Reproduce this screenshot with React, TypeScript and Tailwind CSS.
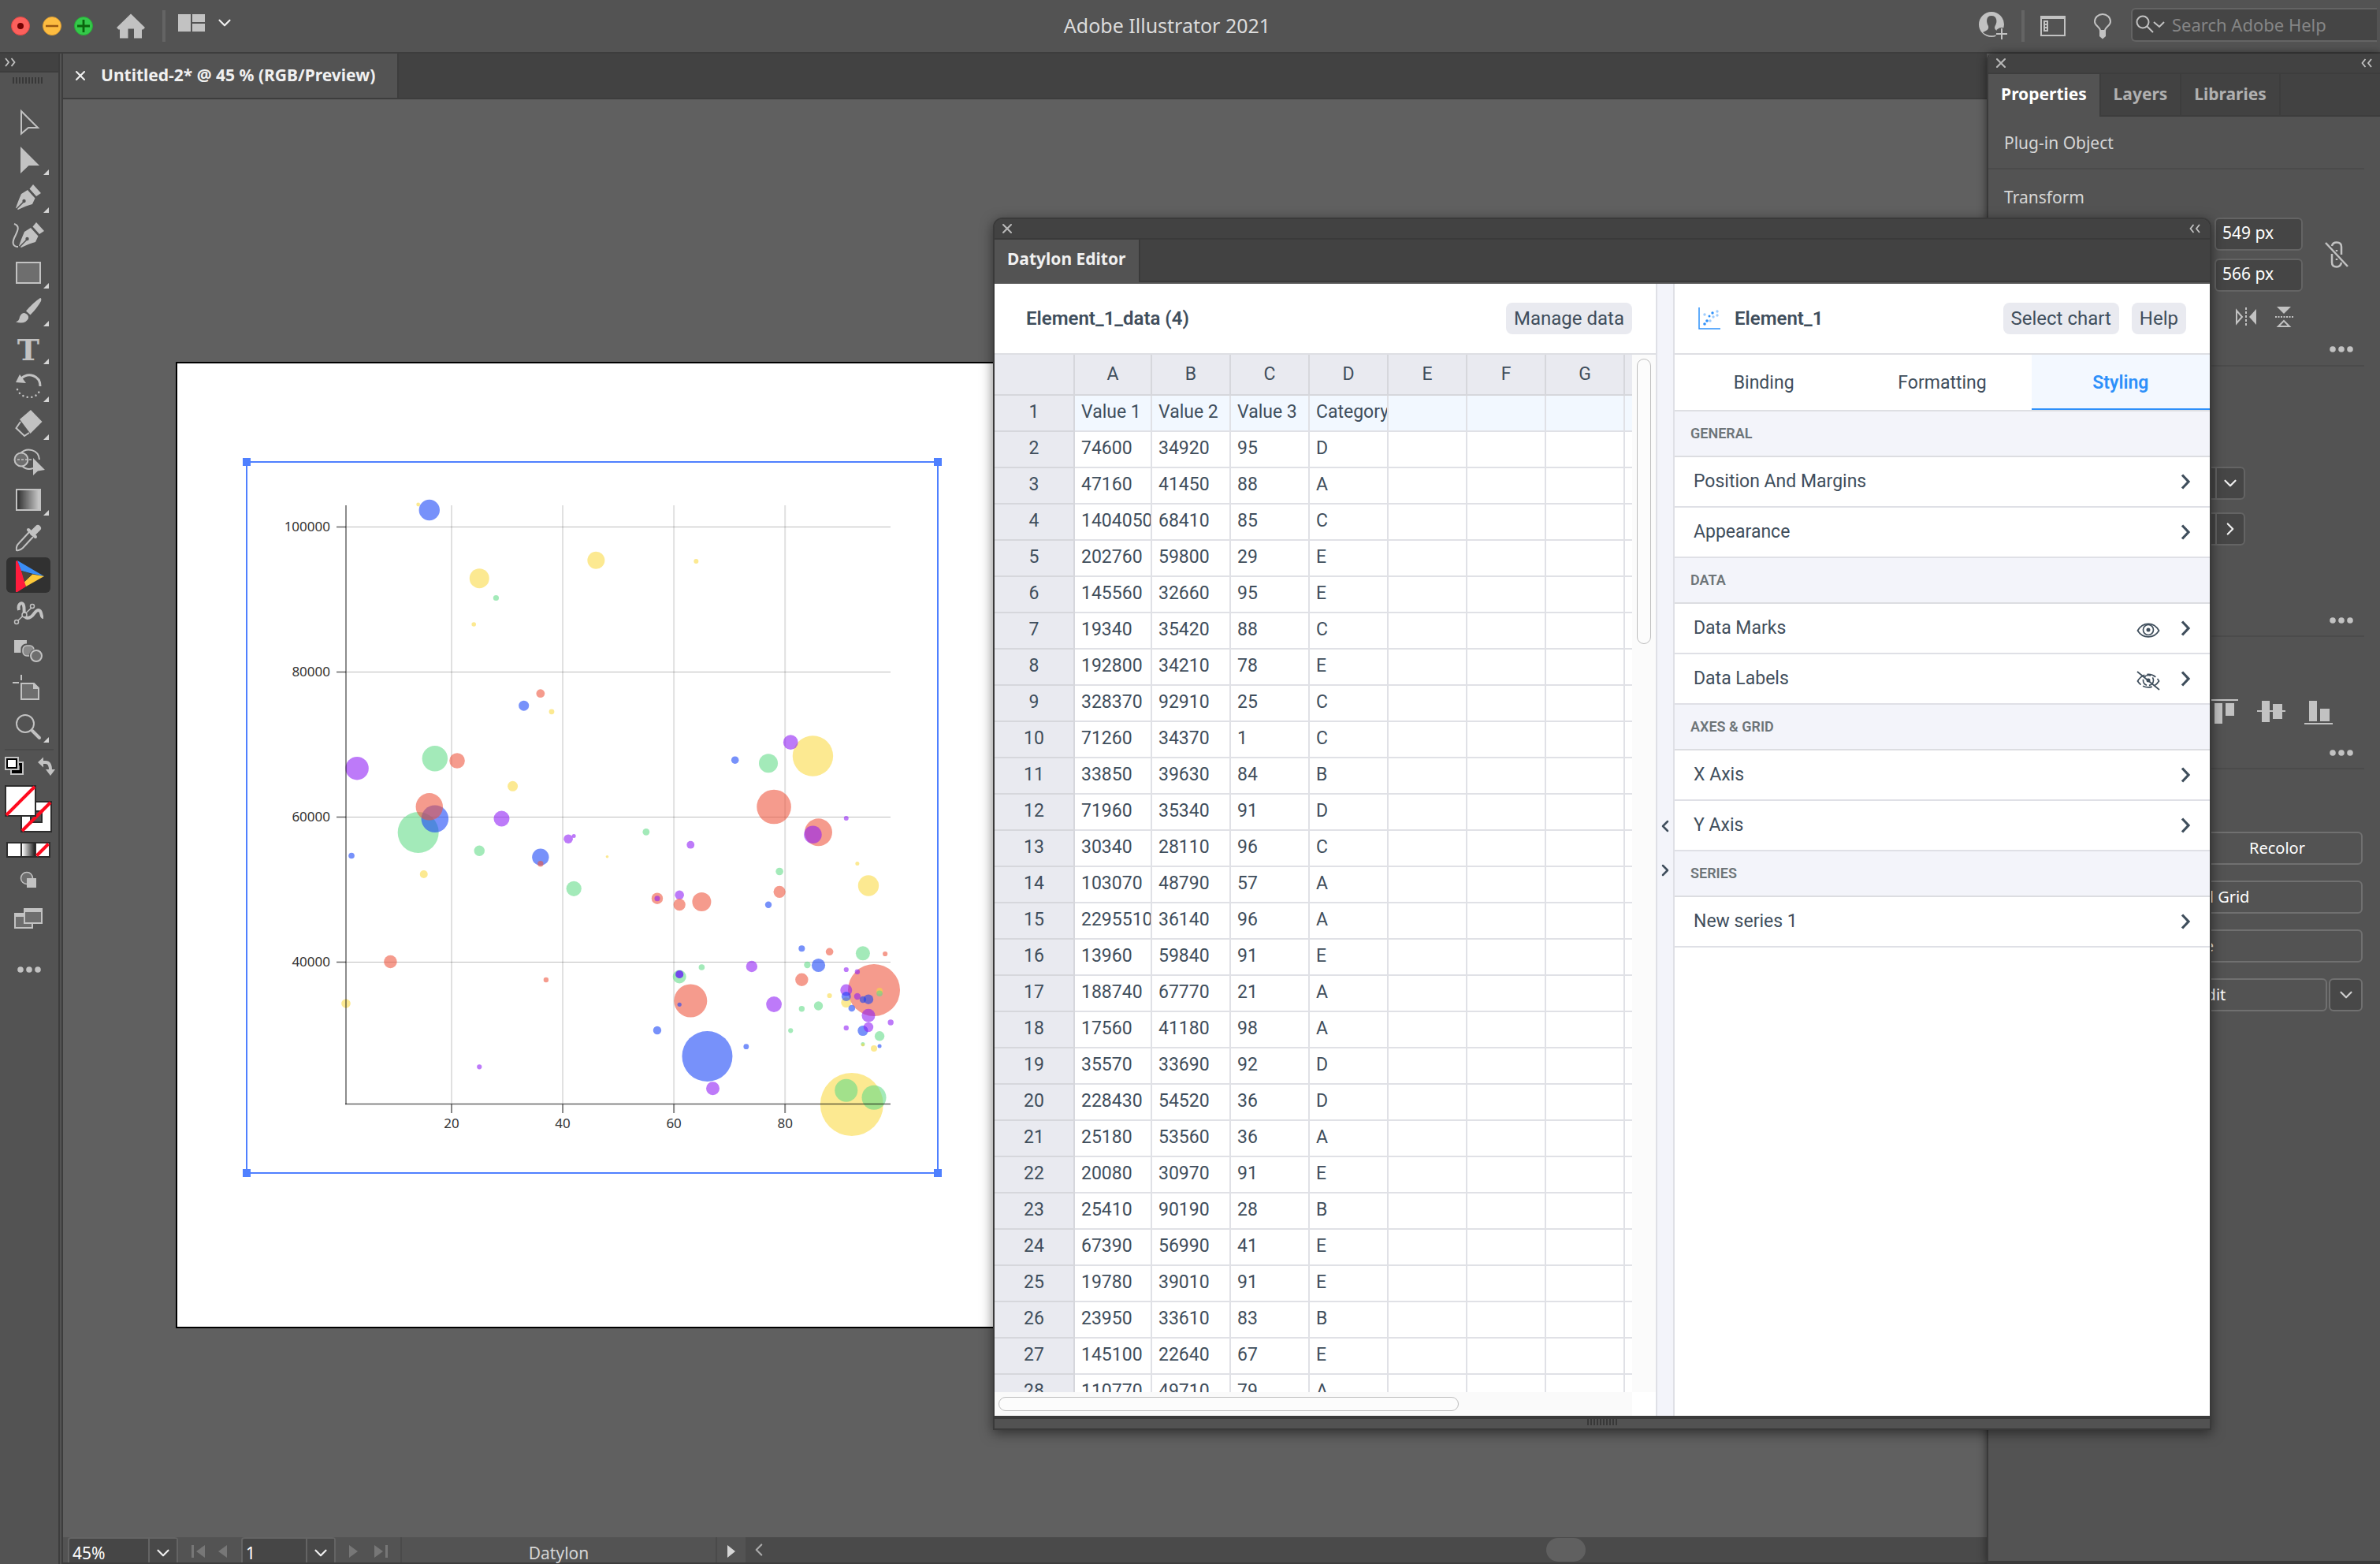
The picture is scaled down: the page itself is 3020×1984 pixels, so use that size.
import React from "react";
import { ChevronDown, ChevronLeft, ChevronRight, X } from "lucide-react";

type Bubble = [x: number, y: number, r: number, color: string];

const RED = "#ee533b";
const BLUE = "#1441f6";
const GREEN = "#60db86";
const YELLOW = "#fad941";
const PURPLE = "#8d1af5";

const bubbles: Bubble[] = [
  [14, 640, 2.4, YELLOW], [16, 647, 13.2, BLUE], [46, 710.7, 11, YELLOW], [64, 712, 3, YELLOW],
  [25, 733.7, 12.5, YELLOW], [28, 758.5, 3.6, GREEN], [24, 792, 2.8, YELLOW], [36, 879.7, 5.4, RED],
  [33, 895.2, 6.5, BLUE], [38, 902.8, 3.4, YELLOW], [85, 959, 25.7, YELLOW], [81, 941.7, 9.4, PURPLE],
  [71, 964.2, 4.8, BLUE], [77, 968.3, 12, GREEN], [17, 962.3, 16.2, GREEN], [21, 965, 9.8, RED],
  [3, 974.7, 14.7, PURPLE], [31, 997.3, 6.5, YELLOW], [14, 1056, 26, GREEN], [17, 1038.7, 17.3, BLUE],
  [16, 1023.3, 17.2, RED], [78, 1023.5, 21.8, RED], [29, 1038.5, 10, PURPLE], [91, 1038, 3, PURPLE],
  [86, 1055.8, 17.5, RED], [85, 1058.7, 11.3, PURPLE], [55, 1055.3, 4.4, GREEN], [41, 1064.2, 5.8, PURPLE],
  [42, 1060.5, 2.5, PURPLE], [63, 1071.7, 4.9, PURPLE], [2, 1085.5, 3.8, BLUE], [25, 1079.2, 6.7, GREEN],
  [36, 1087.2, 10.7, BLUE], [36, 1095.7, 3.7, RED], [48, 1086.7, 1.8, YELLOW], [93, 1095.5, 2.5, YELLOW],
  [95, 1123.5, 13.2, YELLOW], [15, 1109, 5, YELLOW], [79, 1105.5, 4.8, GREEN], [42, 1127.3, 9.6, GREEN],
  [79, 1131.3, 7.6, RED], [57, 1139.7, 7.2, RED], [57, 1139.7, 3.5, PURPLE], [61, 1135.3, 5.8, PURPLE],
  [61, 1147.7, 7.6, RED], [65, 1144, 12, RED], [77, 1147.7, 4.2, BLUE], [9, 1220, 8.3, RED],
  [83, 1203.3, 4, BLUE], [88, 1207.3, 4.8, RED], [94, 1209.3, 9, GREEN], [98, 1210, 3.1, RED],
  [65, 1227, 3.8, GREEN], [74, 1226, 7.2, PURPLE], [84, 1224, 4.2, GREEN], [86, 1224.5, 8.6, BLUE],
  [83, 1242.7, 8.2, RED], [37, 1243, 3.2, RED], [61, 1239, 8.5, GREEN], [61, 1236, 5, BLUE],
  [61, 1236, 5, PURPLE], [96, 1256, 33, RED], [91, 1230, 3.1, PURPLE], [93, 1232.7, 3.2, PURPLE],
  [91, 1271.7, 6.5, YELLOW], [91, 1256, 7.5, PURPLE], [91, 1264, 6, BLUE], [93, 1264, 4.2, PURPLE],
  [97, 1257, 4, YELLOW], [97, 1260.3, 3.8, GREEN], [94, 1268, 4.2, BLUE], [95, 1267.7, 6.2, BLUE],
  [92, 1279, 4.3, BLUE], [88, 1263, 3.1, YELLOW], [86, 1276, 5.7, GREEN], [83, 1279.7, 3.7, GREEN],
  [78, 1274, 9.9, PURPLE], [63, 1269.5, 21, RED], [61, 1274.3, 2.6, BLUE], [1, 1273, 5.8, YELLOW],
  [57, 1307, 5.2, BLUE], [95, 1288.3, 8.5, PURPLE], [99, 1297, 3.7, PURPLE], [91, 1304, 3.2, PURPLE],
  [94, 1307.5, 6.6, BLUE], [95, 1303, 6.2, PURPLE], [97, 1314.3, 6.2, GREEN], [81, 1307.3, 3.1, GREEN],
  [94, 1324.5, 2.5, GREEN], [94, 1325.5, 2, YELLOW], [96, 1330, 4, YELLOW], [97, 1327, 2.5, BLUE],
  [73, 1327.7, 3.4, BLUE], [66, 1340, 32, BLUE], [67, 1380.7, 8.5, PURPLE], [25, 1353.3, 3.1, PURPLE],
  [92, 1401, 40, YELLOW], [91, 1383.3, 14.5, GREEN], [96, 1392.3, 15.5, GREEN],
];

const rows: string[][] = [
  ["Value 1", "Value 2", "Value 3", "Category"],
  ["74600", "34920", "95", "D"],
  ["47160", "41450", "88", "A"],
  ["1404050", "68410", "85", "C"],
  ["202760", "59800", "29", "E"],
  ["145560", "32660", "95", "E"],
  ["19340", "35420", "88", "C"],
  ["192800", "34210", "78", "E"],
  ["328370", "92910", "25", "C"],
  ["71260", "34370", "1", "C"],
  ["33850", "39630", "84", "B"],
  ["71960", "35340", "91", "D"],
  ["30340", "28110", "96", "C"],
  ["103070", "48790", "57", "A"],
  ["2295510", "36140", "96", "A"],
  ["13960", "59840", "91", "E"],
  ["188740", "67770", "21", "A"],
  ["17560", "41180", "98", "A"],
  ["35570", "33690", "92", "D"],
  ["228430", "54520", "36", "D"],
  ["25180", "53560", "36", "A"],
  ["20080", "30970", "91", "E"],
  ["25410", "90190", "28", "B"],
  ["67390", "56990", "41", "E"],
  ["19780", "39010", "91", "E"],
  ["23950", "33610", "83", "B"],
  ["145100", "22640", "67", "E"],
  ["110770", "49710", "79", "A"],
];

const columns = ["A", "B", "C", "D", "E", "F", "G"];

const xPos = (v: number) => 573 + (v - 20) * 7.053;

const BubbleChart: React.FC = () => (
  <svg viewBox="308 581 887 912" width="887" height="912" role="img" aria-label="Bubble chart">
    <rect x="313" y="586" width="877" height="902" fill="none" stroke="#4f80ff" strokeWidth="2" />
    {[313, 1190].map((x) =>
      [586, 1488].map((y) => <rect key={`${x}-${y}`} x={x - 5} y={y - 5} width="10" height="10" fill="#4f80ff" />)
    )}
    {[20, 40, 60, 80].map((v) => (
      <g key={v}>
        <line x1={xPos(v)} x2={xPos(v)} y1="641" y2="1401" stroke="#000" strokeOpacity="0.12" strokeWidth="2" />
        <line x1={xPos(v)} x2={xPos(v)} y1="1401" y2="1412" stroke="#888" strokeWidth="2" />
        <text x={xPos(v)} y="1431" textAnchor="middle" fontSize="17" fill="#333">{v}</text>
      </g>
    ))}
    {[100000, 80000, 60000, 40000].map((v, i) => (
      <g key={v}>
        <line x1="439" x2="1130" y1={668.5 + i * 184} y2={668.5 + i * 184} stroke="#000" strokeOpacity="0.26" strokeWidth="1" />
        <line x1="427" x2="439" y1={668.5 + i * 184} y2={668.5 + i * 184} stroke="#666" strokeWidth="1.5" />
        <text x="419" y={674 + i * 184} textAnchor="end" fontSize="17" fill="#333">{v}</text>
      </g>
    ))}
    {bubbles.map(([x, y, r, color], i) => (
      <circle key={i} cx={xPos(x)} cy={y} r={r} fill={color} fillOpacity="0.58" />
    ))}
    <line x1="439" x2="439" y1="641" y2="1401" stroke="#000" strokeOpacity="0.45" strokeWidth="2" />
    <line x1="438" x2="1130" y1="1400.5" y2="1400.5" stroke="#000" strokeOpacity="0.6" strokeWidth="1.5" />
  </svg>
);

/* ---------- shared bits ---------- */

const G = "#c2c2c2";
const BG = "#535353";

const Dots: React.FC = () => (
  <svg viewBox="0 0 30 10" width="30" height="10" aria-hidden="true">
    {[4, 15, 26].map((x) => <circle key={x} cx={x} cy="5" r="3.8" fill={G} />)}
  </svg>
);

const Grip: React.FC = () => (
  <svg width="38" height="8" viewBox="0 0 38 8" aria-hidden="true">
    {Array.from({ length: 10 }).map((_, i) => (
      <rect key={i} x={i * 4} y="0" width="2" height="8" fill="#383838" />
    ))}
  </svg>
);

const DoubleChevron: React.FC<{ right?: boolean }> = ({ right }) => (
  <svg viewBox="0 0 14 12" width="14" height="12" fill="none" stroke={G} strokeWidth="1.8" aria-hidden="true">
    {right ? <path d="M1 1 L5 6 L1 11 M8.500 1 L12.500 6 L8.500 11" /> : <path d="M5.500 1 L1.500 6 L5.500 11 M13 1 L9 6 L13 11" />}
  </svg>
);

/* ---------- left toolbar ---------- */

const PenNib: React.FC = () => (
  <>
    <path d="M42 7 L52 18 L46 22 L37.500 12.500 Z" fill={G} />
    <path d="M35 14 L44.500 24.500 L41 32 Q33 34 23 39 L20 37 Q23 28 27 19 Z" fill={G} />
    <path d="M20.500 38.500 L30 29" stroke={BG} strokeWidth="1.600" />
    <circle cx="30.500" cy="28" r="2.200" fill={BG} />
  </>
);

const tools: { name: string; more?: boolean; art: React.ReactNode }[] = [
  { name: "Selection", art: <path d="M27 10 V38.500 L36 31 H48 Z" fill="none" stroke={G} strokeWidth="2" /> },
  { name: "Direct selection", more: true, art: <path d="M26 7 V41 L36.500 31 H50 Z" fill={G} /> },
  { name: "Pen", more: true, art: <PenNib /> },
  {
    name: "Curvature",
    art: (
      <>
        <g transform="translate(4 0)"><PenNib /></g>
        <path d="M18 9 C27 12 21 20 18 27 C15 34 17 38 23 38" fill="none" stroke={G} strokeWidth="2" />
      </>
    ),
  },
  { name: "Rectangle", more: true, art: <rect x="21" y="10" width="30" height="26" fill="#6e6e6e" stroke={G} strokeWidth="2" /> },
  {
    name: "Paintbrush",
    more: true,
    art: (
      <>
        <path d="M51 7 Q53 7 52 11 Q47 20 38.500 28.500 L33 23.500 Q42 13 51 7 Z" fill={G} />
        <path d="M31 26 Q37 28 36 33 Q32 41 20 37.500 Q24.500 36 25 31 Q27 26 31 26 Z" fill={G} />
      </>
    ),
  },
  {
    name: "Type",
    more: true,
    art: <text x="36" y="38" textAnchor="middle" fontSize="38" fontWeight="700" fill={G} fontFamily="'DejaVu Serif', serif">T</text>,
  },
  {
    name: "Rotate",
    more: true,
    art: (
      <>
        <path d="M27 13 C36 5 51 9 51 23" fill="none" stroke={G} strokeWidth="3" />
        <path d="M25 8 L20 18 L33 19 Z" fill={G} />
        <path d="M22 27 C27 40 46 40 50 29" fill="none" stroke={G} strokeWidth="2.500" strokeLinecap="round" strokeDasharray="0.100 5.500" />
      </>
    ),
  },
  {
    name: "Eraser",
    more: true,
    art: (
      <>
        <path d="M39 5 L53.500 20 L38.500 35 L25 17 Z" fill={G} />
        <path d="M26 20 L20.500 28 L31 38 L37 34" fill="none" stroke={G} strokeWidth="2" />
      </>
    ),
  },
  {
    name: "Shape builder",
    art: (
      <>
        <path d="M26 12 C34 4 49 7 50 20 M28 28 C32 32 37 33 42 31" fill="none" stroke={G} strokeWidth="2" />
        <circle cx="27" cy="20" r="8.500" fill="#6e6e6e" stroke={G} strokeWidth="2" />
        <path d="M22 20 H42" stroke={G} strokeWidth="1.500" strokeDasharray="3 2" />
        <path d="M42 18 V40 L48 34.500 L57 33 Z" fill={G} />
      </>
    ),
  },
  {
    name: "Gradient",
    more: true,
    art: (
      <>
        <defs>
          <linearGradient id="tool-gradient">
            <stop offset="0" stopColor="#2b2b2b" />
            <stop offset="1" stopColor="#d0d0d0" />
          </linearGradient>
        </defs>
        <rect x="21" y="10" width="30" height="26" fill="url(#tool-gradient)" stroke={G} strokeWidth="2" />
      </>
    ),
  },
  {
    name: "Eyedropper",
    art: (
      <>
        <path d="M37 16 L24 30 Q20 34 21 39 Q25 40 29 36 L42 22" fill="none" stroke={G} strokeWidth="2" />
        <path d="M42 17 L48 11" stroke={G} strokeWidth="8" strokeLinecap="round" />
        <path d="M36 13 L45 22" stroke={G} strokeWidth="4" strokeLinecap="round" />
      </>
    ),
  },
  {
    name: "Datylon",
    art: (
      <>
        <rect x="8" y="0" width="56" height="45" rx="6" fill="#313131" />
        <path d="M20 5 L22 4 L29 22 L33 37 L22 44 L20 44 Z" fill="#ff1c3d" />
        <path d="M22 4 L56 24 L42 21 L27 17 Z" fill="#3b8df5" />
        <path d="M56 24 L33 37 L31 31 L41 21.500 Z" fill="#fdc93a" />
        <path d="M27 17 L41 21.500 L31 31 Z" fill="#4b463a" />
      </>
    ),
  },
  {
    name: "Puppet warp",
    art: (
      <>
        <path d="M24 19 C22 10 29 8 30 13 C32 19 28 28 35 29 C43 29 44 18 49 19 C54 20 51 28 55 28" fill="none" stroke={G} strokeWidth="4" />
        <path d="M22 33 L40 16" stroke={G} strokeWidth="1.500" />
        <circle cx="21" cy="34" r="2.500" fill={BG} stroke={G} strokeWidth="1.500" />
        <circle cx="41" cy="14" r="2.500" fill={BG} stroke={G} strokeWidth="1.500" />
        <circle cx="31" cy="25" r="3" fill={BG} stroke={G} strokeWidth="1.500" />
      </>
    ),
  },
  {
    name: "Blend",
    art: (
      <>
        <rect x="18" y="9" width="16" height="16" fill={G} />
        <rect x="28" y="15" width="16" height="15" rx="5" fill="#8a8a8a" stroke={BG} strokeWidth="3" />
        <rect x="29" y="16" width="14" height="13" rx="5" fill="#8a8a8a" stroke={G} strokeWidth="1.500" />
        <circle cx="46" cy="29" r="9" fill={BG} />
        <circle cx="46" cy="29" r="7" fill="#6e6e6e" stroke={G} strokeWidth="2" />
      </>
    ),
  },
  {
    name: "Artboard",
    art: (
      <>
        <path d="M16 15 H24 M27 5 V12" stroke={G} strokeWidth="2" />
        <path d="M27 16 H43 L49 22 V36 H27 Z" fill="#6e6e6e" stroke={G} strokeWidth="2" />
        <path d="M42 15 V23 H50 Z" fill={G} />
      </>
    ),
  },
  {
    name: "Zoom",
    more: true,
    art: (
      <>
        <circle cx="32" cy="19" r="11" fill="none" stroke={G} strokeWidth="2" />
        <path d="M41 28 L50 37" stroke={G} strokeWidth="4" strokeLinecap="round" />
      </>
    ),
  },
];

const Toolbar: React.FC = () => (
  <aside className="flex w-[80px] shrink-0 border-r-2 border-[#3d3d3d] bg-[#535353]">
    <div className="flex w-[76px] flex-col border-r-2 border-[#3d3d3d]">
      <div className="flex h-6 shrink-0 items-center border-b-2 border-[#3d3d3d] bg-[#424242] pl-1.5">
        <button type="button" aria-label="Expand toolbar"><DoubleChevron right /></button>
      </div>
      <div className="flex h-[39px] shrink-0 pt-1.5 pl-4"><Grip /></div>
      {tools.map(({ name, more, art }) => (
        <button key={name} type="button" aria-label={name} className="h-12 shrink-0">
          <svg viewBox="0 0 74 48" width="74" height="48">
            {art}
            {more && <path d="M62 36 V43 H55 Z" fill="#d6d6d6" />}
          </svg>
        </button>
      ))}
      <div className="mx-1.5 mt-[3px] h-0.5 shrink-0 bg-[#4a4a4a]" />
      <div className="flex h-10 shrink-0">
        <button type="button" aria-label="Default fill and stroke">
          <svg viewBox="0 0 40 40" width="40" height="40">
            <rect x="14" y="15" width="15" height="15" fill="#000" stroke={G} strokeWidth="2" />
            <rect x="18.500" y="19" width="6" height="6" fill="#fff" />
            <rect x="7" y="9" width="16" height="15" fill="#000" stroke={G} strokeWidth="2" />
            <rect x="10" y="12" width="10" height="9" fill="#fff" />
          </svg>
        </button>
        <button type="button" aria-label="Swap fill and stroke">
          <svg viewBox="0 0 34 40" width="34" height="40">
            <path d="M14 15 H18 Q24 15 24 25" fill="none" stroke={G} strokeWidth="4" />
            <path d="M8 15 L15 8.500 V21.500 Z M18 24 H30 L24 32 Z" fill={G} />
          </svg>
        </button>
      </div>
      <button type="button" aria-label="Fill and stroke" className="h-[72px] shrink-0">
        <svg viewBox="0 0 74 72" width="74" height="72">
          <rect x="27" y="25" width="38" height="38" fill="#fff" stroke="#2d2d2d" strokeWidth="2" />
          <path d="M28 62 L64 26" stroke="#ff0a1e" strokeWidth="4" />
          <rect x="39" y="37" width="14" height="14" fill="#535353" stroke="#2d2d2d" strokeWidth="2" />
          <path d="M38 52 L54 36" stroke="#ff0a1e" strokeWidth="4" />
          <rect x="7" y="5" width="38" height="38" fill="#fff" stroke="#2d2d2d" strokeWidth="2" />
          <path d="M8 42 L44 6" stroke="#ff0a1e" strokeWidth="4" />
        </svg>
      </button>
      <button type="button" aria-label="Color mode" className="h-8 shrink-0">
        <svg viewBox="0 0 74 32" width="74" height="32">
          <defs>
            <linearGradient id="mode-gradient">
              <stop offset="0" stopColor="#fff" />
              <stop offset="1" stopColor="#222" />
            </linearGradient>
          </defs>
          <rect x="8" y="4" width="56" height="20" fill="#2d2d2d" />
          <rect x="10" y="6" width="16" height="16" fill="#fff" />
          <rect x="28" y="6" width="16" height="16" fill="url(#mode-gradient)" />
          <rect x="46" y="6" width="16" height="16" fill="#fff" />
          <path d="M46.500 21.500 L61.500 6.500" stroke="#ff0a1e" strokeWidth="4" />
        </svg>
      </button>
      <button type="button" aria-label="Draw mode" className="h-10 shrink-0">
        <svg viewBox="0 0 74 40" width="74" height="40">
          <circle cx="34" cy="18" r="7.500" fill="#6e6e6e" stroke={G} strokeWidth="1.500" />
          <rect x="34" y="18" width="12" height="12" fill={G} />
        </svg>
      </button>
      <button type="button" aria-label="Screen mode" className="h-[58px] shrink-0">
        <svg viewBox="0 0 74 58" width="74" height="58">
          <rect x="19" y="23" width="22" height="18" fill="#6e6e6e" stroke={G} strokeWidth="2" />
          <rect x="18" y="22" width="24" height="5" fill={G} />
          <rect x="31" y="17" width="22" height="18" fill="#6e6e6e" stroke={G} strokeWidth="2" />
          <rect x="30" y="16" width="24" height="5" fill={G} />
        </svg>
      </button>
      <button type="button" aria-label="Edit toolbar" className="flex h-[72px] shrink-0 items-center justify-center">
        <Dots />
      </button>
    </div>
  </aside>
);

/* ---------- top bar ---------- */

const TopBar: React.FC = () => (
  <header className="flex h-[68px] shrink-0 items-center border-b-2 border-[#3d3d3d] bg-[#535353]">
    <div className="flex w-[451px] shrink-0 items-center pl-3.5">
      <div className="flex gap-4">
        <button type="button" aria-label="Close window">
          <svg viewBox="0 0 24 24" width="24" height="24">
            <circle cx="12" cy="12" r="11.500" fill="#fc605c" stroke="#df4744" />
            <circle cx="12" cy="12" r="4" fill="#730303" />
          </svg>
        </button>
        <button type="button" aria-label="Minimize window">
          <svg viewBox="0 0 24 24" width="24" height="24">
            <circle cx="12" cy="12" r="11.500" fill="#fdbc40" stroke="#de9f34" />
            <path d="M4 12 H20" stroke="#985712" strokeWidth="2.500" />
          </svg>
        </button>
        <button type="button" aria-label="Zoom window">
          <svg viewBox="0 0 24 24" width="24" height="24">
            <circle cx="12" cy="12" r="11.500" fill="#34c84a" stroke="#27aa35" />
            <path d="M4 12 H20 M12 4 V20" stroke="#0b650d" strokeWidth="2.800" />
          </svg>
        </button>
      </div>
      <button type="button" aria-label="Home" className="ml-[30px]">
        <svg viewBox="0 0 36 32" width="36" height="32">
          <path d="M18 0.500 L36 18 L33.500 20.500 H32 V31.500 H22 V19.500 H14.500 V31.500 H4 V20.500 H2.500 L0 18 Z" fill={G} />
        </svg>
      </button>
      <div className="ml-[22px] h-10 w-1 bg-[#646464]" />
      <button type="button" aria-label="Arrange documents" className="ml-4 flex items-center gap-3 pb-2">
        <svg viewBox="0 0 34 22" width="34" height="22">
          <path d="M0 0 H16 V22 H0 Z M18 0 H34 V10 H18 Z M18 12 H34 V22 H18 Z" fill={G} />
        </svg>
        <ChevronDown size={26} color="#f0f0f0" strokeWidth={2} />
      </button>
    </div>
    <h1 className="flex-1 pb-0.5 text-center text-[25px] leading-8 text-[#dcdcdc]">Adobe Illustrator 2021</h1>
    <div className="flex shrink-0 items-center">
      <button type="button" aria-label="Account">
        <svg viewBox="0 0 36 36" width="36" height="36">
          <circle cx="16" cy="16" r="15" fill={G} stroke={G} strokeWidth="2" />
          <path d="M16 5 C9 5 9 13 12 18 Q13 22 9 24 L5 26 Q10 31 20 30 L24 25 L22 23.500 Q19 21 20.500 18 C24 13 23 5 16 5 Z" fill={BG} />
          <circle cx="29" cy="28" r="8" fill={BG} />
          <path d="M22 28 H36 M29 21 V35" stroke={G} strokeWidth="2" />
        </svg>
      </button>
      <div className="ml-[18px] h-10 w-1 bg-[#646464]" />
      <button type="button" aria-label="Workspace" className="ml-5">
        <svg viewBox="0 0 32 26" width="32" height="26">
          <path d="M1 1 H31 V25 H1 Z" fill="none" stroke={G} strokeWidth="2" />
          <path d="M0 0 H32 V4 H0 Z" fill={G} />
          <path d="M4 6 H10 V20 H4 Z M6 8 V10 H8 V8 Z M6 12 V14 H8 V12 Z M6 16 V18 H8 V16 Z" fill={G} fillRule="evenodd" />
        </svg>
      </button>
      <button type="button" aria-label="Learn" className="ml-9">
        <svg viewBox="0 0 22 33" width="22" height="33">
          <path d="M8 22 C8 17 1 16 1 10.500 A10 9.500 0 0 1 21 10.500 C21 16 14 17 14 22 Z" fill="none" stroke={G} strokeWidth="2" />
          <path d="M7 22 H15 V29 L11 32.500 L7 29 Z" fill={G} />
        </svg>
      </button>
      <label className="mr-1 mb-1 ml-[25px] flex h-[43px] w-[312px] items-center rounded-l-md border-2 border-r-0 border-[#646464] bg-[#454545] pl-1">
        <svg viewBox="0 0 38 24" width="38" height="24" className="shrink-0" aria-hidden="true">
          <circle cx="9" cy="9" r="7.500" fill="none" stroke={G} strokeWidth="2" />
          <path d="M14 14 L22 22 M23 9 L30 15 L36 9" fill="none" stroke={G} strokeWidth="2" />
        </svg>
        <input
          type="search"
          aria-label="Search Adobe Help"
          placeholder="Search Adobe Help"
          className="ml-2 w-full bg-transparent text-[22px] text-white outline-none placeholder:text-[#868686]"
        />
      </label>
    </div>
  </header>
);

/* ---------- document area ---------- */

const StatusSelect: React.FC<{ label: string; value: string; className: string }> = ({ label, value, className }) => (
  <label className={`relative flex h-8 rounded-t border-2 border-b-0 border-[#646464] bg-[#464646] ${className}`}>
    <select aria-label={label} className="w-full appearance-none pt-1 pl-1 text-[21px] leading-7 text-white outline-none">
      <option>{value}</option>
    </select>
    <span className="pointer-events-none absolute inset-y-0 right-0 flex w-9 items-center justify-center border-l-2 border-[#646464] bg-[#494949] pt-1.5">
      <ChevronDown size={26} color="#f0f0f0" strokeWidth={2} />
    </span>
  </label>
);

const StatusBar: React.FC = () => (
  <footer className="flex h-[34px] shrink-0 border-b-2 border-[#3d3d3d] bg-[#535353]">
    <StatusSelect label="Zoom level" value="45%" className="ml-1.5 w-[140px]" />
    <div className="flex w-[80px] items-center justify-center gap-4 pt-1">
      <button type="button" aria-label="First artboard">
        <svg viewBox="0 0 18 16" width="18" height="16"><path d="M0 0 H3 V16 H0 Z M17 0 V16 L6 8 Z" fill="#777" /></svg>
      </button>
      <button type="button" aria-label="Previous artboard">
        <svg viewBox="0 0 12 16" width="12" height="16"><path d="M11 0 V16 L0 8 Z" fill="#777" /></svg>
      </button>
    </div>
    <StatusSelect label="Artboard" value="1" className="w-[120px]" />
    <div className="flex w-[84px] items-center justify-center gap-5 border-r-2 border-[#4a4a4a] pt-1">
      <button type="button" aria-label="Next artboard">
        <svg viewBox="0 0 12 16" width="12" height="16"><path d="M1 0 V16 L12 8 Z" fill="#777" /></svg>
      </button>
      <button type="button" aria-label="Last artboard">
        <svg viewBox="0 0 18 16" width="18" height="16"><path d="M15 0 H18 V16 H15 Z M1 0 V16 L12 8 Z" fill="#777" /></svg>
      </button>
    </div>
    <div className="flex w-[400px] items-center justify-center border-r-2 border-[#4a4a4a] pt-2 text-[21px] leading-6 text-[#d6d6d6]">
      Datylon
    </div>
    <button type="button" aria-label="Status options" className="flex w-9 items-center justify-center pt-1">
      <svg viewBox="0 0 12 16" width="12" height="16"><path d="M1 0 V16 L11 8 Z" fill="#d6d6d6" /></svg>
    </button>
    <div className="flex flex-1 items-center bg-[#4a4a4a] pl-1">
      <ChevronLeft size={26} color="#aaa" strokeWidth={2} />
      <div className="ml-[986px] h-[30px] w-[50px] rounded-full bg-[#606060]" />
    </div>
  </footer>
);

const DocumentArea: React.FC = () => (
  <main className="flex min-w-0 flex-1 flex-col">
    <div className="flex h-[58px] shrink-0 border-b-2 border-[#3d3d3d] bg-[#424242]">
      <div className="flex items-center border-r-2 border-[#3d3d3d] bg-[#535353] pr-7 pl-3">
        <button type="button" aria-label="Close document">
          <X size={20} color="#f0f0f0" strokeWidth={2.5} />
        </button>
        <span className="ml-4 pb-0.5 text-[21px] leading-7 font-bold text-[#f0f0f0]">Untitled-2* @ 45 % (RGB/Preview)</span>
      </div>
    </div>
    <div className="relative flex-1 overflow-hidden bg-[#606060]">
      <div className="absolute top-[333px] left-[143px] h-[1226px] w-[1226px] border-2 border-black bg-white">
        <div className="absolute top-[120px] left-[83px]"><BubbleChart /></div>
      </div>
    </div>
    <StatusBar />
  </main>
);

/* ---------- properties panel ---------- */

const ActionButton: React.FC<{ children: React.ReactNode; className?: string }> = ({ children, className = "" }) => (
  <button type="button" className={`h-[42px] rounded-md border-2 border-[#707070] text-[20px] leading-7 text-white ${className}`}>
    {children}
  </button>
);

const OptionBox: React.FC<{ label: string; children: React.ReactNode }> = ({ label, children }) => (
  <button type="button" aria-label={label} className="flex h-[42px] w-[220px] justify-end rounded-md border-2 border-[#646464] bg-[#464646]">
    <span className="flex h-full w-9 items-center justify-center border-l-2 border-[#646464]">{children}</span>
  </button>
);

const PropertiesPanel: React.FC = () => (
  <aside className="z-10 flex w-[499px] shrink-0 flex-col rounded-tl-lg border-b-4 border-l-2 border-[#3a3a3a] bg-[#535353] shadow-[0_0_12px_rgba(0,0,0,0.5)]">
    <div className="flex h-[26px] shrink-0 items-center justify-between rounded-tl-lg border-b-2 border-[#3d3d3d] bg-[#424242] pr-2.5 pl-1.5">
      <button type="button" aria-label="Close panel"><X size={20} color="#b8b8b8" strokeWidth={2.5} /></button>
      <button type="button" aria-label="Collapse panel"><DoubleChevron /></button>
    </div>
    <div role="tablist" className="flex h-[54px] shrink-0 bg-[#424242] text-[21px] leading-7 font-bold text-[#b0b0b0]">
      <button role="tab" aria-selected="true" type="button" className="w-[143px] border-r-2 border-[#3d3d3d] bg-[#535353] pb-1 text-white">Properties</button>
      <button role="tab" aria-selected="false" type="button" className="w-[102px] border-r-2 border-b-2 border-[#3d3d3d] pb-0.5">Layers</button>
      <button role="tab" aria-selected="false" type="button" className="w-[126px] border-r-2 border-b-2 border-[#3d3d3d] pb-0.5">Libraries</button>
      <div className="flex-1 border-b-2 border-[#3d3d3d]" />
    </div>
    <div className="mr-5 flex h-[67px] shrink-0 items-center border-b-2 border-[#4b4b4b] pl-5 text-[21px] leading-7 text-[#d6d6d6]">
      Plug-in Object
    </div>
    <section className="mr-5 flex h-[250px] shrink-0 flex-col border-b-2 border-[#4b4b4b] pt-[21px]">
      <h2 className="pl-5 text-[21px] leading-7 text-[#d6d6d6]">Transform</h2>
      <div className="mt-3 flex items-center justify-end gap-7 pr-5">
        <div className="flex flex-col gap-2.5">
          <input aria-label="Width" defaultValue="549 px" className="h-[42px] w-[112px] rounded-md border-2 border-[#646464] bg-[#454545] pb-1 pl-2 text-[21px] text-white" />
          <input aria-label="Height" defaultValue="566 px" className="h-[42px] w-[112px] rounded-md border-2 border-[#646464] bg-[#454545] pb-1 pl-2 text-[21px] text-white" />
        </div>
        <button type="button" aria-label="Constrain proportions">
          <svg viewBox="0 0 30 34" width="30" height="34">
            <path d="M9 6 Q10 1.500 15 1.500 Q21 1.500 21 7 V17 M21 27 Q20 32.500 15 32.500 Q9 32.500 9 27 V16" fill="none" stroke={G} strokeWidth="2.500" />
            <path d="M15 11 V13 M15 22 V24" stroke={G} strokeWidth="2.500" />
            <path d="M1 2 L29 32" stroke={G} strokeWidth="2.500" />
          </svg>
        </button>
      </div>
      <div className="mt-[18px] flex justify-end gap-[22px] pr-[90px]">
        <button type="button" aria-label="Flip horizontally">
          <svg viewBox="0 0 28 28" width="28" height="28">
            <path d="M2 6 L9 14 L2 22 Z" fill="none" stroke={G} strokeWidth="2" />
            <path d="M27 4 V24 L18 14 Z" fill={G} />
            <path d="M14 2 V27" stroke={G} strokeWidth="2" strokeDasharray="3 2" />
          </svg>
        </button>
        <button type="button" aria-label="Flip vertically">
          <svg viewBox="0 0 24 28" width="24" height="28">
            <path d="M3 1 H21 L12 10 Z" fill={G} />
            <path d="M5 26 H19 L12 19 Z" fill="none" stroke={G} strokeWidth="2" />
            <path d="M1 14 H24" stroke={G} strokeWidth="2" strokeDasharray="2 1.500" />
          </svg>
        </button>
      </div>
      <button type="button" aria-label="Transform options" className="mt-[22px] mr-3.5 self-end"><Dots /></button>
    </section>
    <section className="mr-5 flex h-[343px] shrink-0 flex-col items-end border-b-2 border-[#4b4b4b] pt-[127px]">
      <div className="mr-[151px] flex flex-col gap-4">
        <OptionBox label="Stroke weight"><ChevronDown size={26} color="#f0f0f0" strokeWidth={2} /></OptionBox>
        <OptionBox label="Opacity"><ChevronRight size={26} color="#f0f0f0" strokeWidth={2} /></OptionBox>
      </div>
      <button type="button" aria-label="Appearance options" className="mt-[90px] mr-3.5"><Dots /></button>
    </section>
    <section className="mr-5 flex h-[168px] shrink-0 flex-col items-end border-b-2 border-[#4b4b4b] pt-[79px]">
      <div className="mr-10 flex gap-6">
        <button type="button" aria-label="Align top">
          <svg viewBox="0 0 36 32" width="36" height="32"><path d="M0 0 H36 V2 H0 Z M6 5 H16 V31 H6 Z M20 5 H31 V21 H20 Z" fill={G} /></svg>
        </button>
        <button type="button" aria-label="Align middle">
          <svg viewBox="0 0 36 32" width="36" height="32"><path d="M0 14 H36 V16 H0 Z M6 2 H16 V29 H6 Z M20 6 H32 V25 H20 Z" fill={G} /></svg>
        </button>
        <button type="button" aria-label="Align bottom">
          <svg viewBox="0 0 36 32" width="36" height="32"><path d="M0 30 H36 V32 H0 Z M6 2 H16 V28 H6 Z M20 12 H32 V28 H20 Z" fill={G} /></svg>
        </button>
      </div>
      <button type="button" aria-label="Align options" className="mt-[31px] mr-3.5"><Dots /></button>
    </section>
    <section className="flex flex-col gap-5 pt-[79px] pr-[22px] pl-[21px]">
      <div className="flex gap-5">
        <ActionButton className="flex-1">Isolate</ActionButton>
        <ActionButton className="flex-1">Recolor</ActionButton>
      </div>
      <ActionButton>Align to Pixel Grid</ActionButton>
      <ActionButton>Arrange</ActionButton>
      <div className="flex gap-0.5">
        <ActionButton className="flex-1">Start Global Edit</ActionButton>
        <button type="button" aria-label="Global edit options" className="flex h-[42px] w-[43px] items-center justify-center rounded-md border-2 border-[#707070] bg-[#484848]">
          <ChevronDown size={26} color="#d0d0d0" strokeWidth={2} />
        </button>
      </div>
    </section>
  </aside>
);

/* ---------- editor window ---------- */

const PillButton: React.FC<{ children: React.ReactNode }> = ({ children }) => (
  <button type="button" className="h-10 rounded-lg bg-[#e9eaf0] px-2.5 text-[24px] leading-7">{children}</button>
);

const DataSheet: React.FC = () => (
  <div className="flex min-h-0 flex-1">
    <div className="flex min-w-0 flex-1 flex-col">
      <div className="min-h-0 flex-1 overflow-hidden">
        <table className="w-full table-fixed border-separate border-spacing-0 text-[23px] leading-7">
          <colgroup>
            <col className="w-[102px]" />
            <col className="w-[98px]" />
            {columns.slice(1).map((c) => <col key={c} className="w-[100px]" />)}
            <col />
          </colgroup>
          <thead>
            <tr className="h-[52px] bg-[#e9eaf0]">
              <td className="border-r-2 border-b-2 border-[#d6d7dc]" />
              {columns.map((c) => (
                <th key={c} scope="col" className="border-r-2 border-b-2 border-[#d6d7dc] p-0 font-normal">{c}</th>
              ))}
              <td className="border-b-2 border-[#d6d7dc]" />
            </tr>
          </thead>
          <tbody>
            {rows.map((row, i) => (
              <tr key={i} className={i === 0 ? "h-[46px] bg-[#f2f8ff]" : "h-[46px] bg-white"}>
                <th scope="row" className="border-r-2 border-b-2 border-[#d6d7dc] bg-[#e9eaf0] p-0 pb-0.5 font-normal">{i + 1}</th>
                {columns.map((c, j) => (
                  <td key={c} className="overflow-hidden border-r-2 border-b-2 border-[#e0e1e6] p-0 pb-0.5 pl-2 whitespace-nowrap">{row[j]}</td>
                ))}
                <td className="border-b-2 border-[#e0e1e6] p-0" />
              </tr>
            ))}
          </tbody>
        </table>
      </div>
      <div className="flex h-[30px] shrink-0 items-center bg-[#fafafa] pl-[5px]">
        <div className="h-[18px] w-[584px] rounded-full border border-[#bdbdbd] bg-[#fcfcfc]" />
      </div>
    </div>
    <div className="mb-[30px] flex w-[30px] shrink-0 justify-center bg-[#fbfbfb] pt-[5px]">
      <div className="h-[362px] w-[18px] rounded-full border border-[#bdbdbd] bg-[#fcfcfc]" />
    </div>
  </div>
);

const Eye: React.FC<{ off?: boolean }> = ({ off }) => (
  <svg viewBox="0 0 30 26" width="30" height="26" fill="none" stroke="#3f4e5c" aria-hidden="true">
    <path d="M1.500 14 C8 2.500 22 2.500 28.500 14 C22 24.500 8 24.500 1.500 14 Z" strokeWidth="1.700" strokeDasharray={off ? "12 3" : undefined} />
    <circle cx="15" cy="13" r="6.500" strokeWidth="1.700" strokeDasharray={off ? "9 3" : undefined} />
    <circle cx="15" cy="13" r="2.500" fill="#3f4e5c" stroke="none" />
    {off && <path d="M1 2 L29 25" strokeWidth="1.700" />}
  </svg>
);

type Item = { label: string; eye?: "on" | "off" };

const groups: { title: string; items: Item[] }[] = [
  { title: "GENERAL", items: [{ label: "Position And Margins" }, { label: "Appearance" }] },
  { title: "DATA", items: [{ label: "Data Marks", eye: "on" }, { label: "Data Labels", eye: "off" }] },
  { title: "AXES & GRID", items: [{ label: "X Axis" }, { label: "Y Axis" }] },
  { title: "SERIES", items: [{ label: "New series 1" }] },
];

const StylingPane: React.FC = () => (
  <div className="flex w-[679px] shrink-0 flex-col">
    <div className="flex h-[90px] shrink-0 items-center border-b-2 border-[#dedfe3] pr-[30px] pl-[30px]">
      <svg viewBox="0 0 28 28" width="28" height="28" aria-hidden="true">
        <path d="M1 0 V27 H28" fill="none" stroke="#2d90fa" strokeWidth="1.500" />
        <g fill="#2d90fa">
          <circle cx="8" cy="21" r="1.800" />
          <circle cx="11" cy="17" r="1.800" />
          <circle cx="14" cy="11" r="1.500" />
          <circle cx="18" cy="7" r="1.700" />
        </g>
        <g fill="#2d90fa" fillOpacity="0.45">
          <circle cx="8" cy="9" r="1.700" />
          <circle cx="15" cy="17" r="1.700" />
          <circle cx="19" cy="12" r="1.700" />
          <circle cx="24" cy="5" r="1.700" />
          <circle cx="24" cy="10" r="1.700" />
        </g>
      </svg>
      <h2 className="ml-[18px] flex-1 text-[24px] leading-7 font-semibold">Element_1</h2>
      <div className="flex gap-4">
        <PillButton>Select chart</PillButton>
        <PillButton>Help</PillButton>
      </div>
    </div>
    <div role="tablist" className="flex h-[72px] shrink-0 border-b-2 border-[#dedfe3] text-[23px] leading-7">
      <button role="tab" aria-selected="false" type="button" className="flex-1 pt-0.5">Binding</button>
      <button role="tab" aria-selected="false" type="button" className="flex-1 pt-0.5">Formatting</button>
      <button role="tab" aria-selected="true" type="button" className="flex-1 border-b-2 border-[#2d90fa] bg-[#f3f8ff] pt-1 font-semibold text-[#2d90fa]">Styling</button>
    </div>
    {groups.map(({ title, items }) => (
      <section key={title}>
        <h3 className="flex h-[58px] items-center border-b-2 border-[#dcdde1] bg-[#f3f4fa] pl-5 text-[18px] leading-6 font-semibold text-[#6d7478]">{title}</h3>
        {items.map(({ label, eye }) => (
          <button key={label} type="button" className="flex h-16 w-full items-center border-b-2 border-[#dfe0e6] pr-6 pl-6 text-left text-[23px] leading-7">
            <span className="flex-1">{label}</span>
            {eye && <span className="mr-[26px] pt-1"><Eye off={eye === "off"} /></span>}
            <svg viewBox="0 0 13 20" width="13" height="20" aria-hidden="true">
              <path d="M2 1.500 L10 10 L2 18.500" fill="none" stroke="currentColor" strokeWidth="3.200" />
            </svg>
          </button>
        ))}
      </section>
    ))}
  </div>
);

const EditorWindow: React.FC = () => (
  <div className="absolute top-[276px] right-[214px] bottom-[170px] left-[1260px] z-20 flex flex-col overflow-hidden rounded-t-xl border-2 border-[#3a3a3a] bg-[#525252] shadow-[0_4px_16px_rgba(0,0,0,0.5)]">
    <div className="flex h-[26px] shrink-0 items-center justify-between border-b-2 border-[#3a3a3a] bg-[#424242] pr-3 pl-1.5">
      <button type="button" aria-label="Close editor"><X size={20} color="#b8b8b8" strokeWidth={2.5} /></button>
      <button type="button" aria-label="Collapse editor"><DoubleChevron /></button>
    </div>
    <div className="flex h-14 shrink-0 border-b-2 border-[#545454] bg-[#424242]">
      <div className="border-r-2 border-[#3a3a3a] bg-[#535353] px-4 pt-2.5 text-[21px] leading-7 font-bold text-[#f0f0f0]">Datylon Editor</div>
      <div className="flex-1 border-b-2 border-[#3a3a3a]" />
    </div>
    <div className="flex min-h-0 flex-1 bg-white font-[Roboto,sans-serif] text-[#3f4e5c]">
      <div className="flex min-w-0 flex-1 flex-col">
        <div className="flex h-[90px] shrink-0 items-center justify-between border-b-2 border-[#dedfe3] pr-[30px] pl-10">
          <h2 className="text-[24px] leading-7 font-semibold">Element_1_data (4)</h2>
          <PillButton>Manage data</PillButton>
        </div>
        <DataSheet />
      </div>
      <div className="flex w-[24px] shrink-0 flex-col items-center justify-center gap-8 border-x-2 border-[#dfe0e6] bg-[#f3f4fa] pb-1">
        <button type="button" aria-label="Collapse left"><ChevronLeft size={24} strokeWidth={2.5} /></button>
        <button type="button" aria-label="Collapse right"><ChevronRight size={24} strokeWidth={2.5} /></button>
      </div>
      <StylingPane />
    </div>
    <div className="flex h-4 shrink-0 justify-center border-t-4 border-[#3a3a3a]"><Grip /></div>
  </div>
);

export default function App() {
  return (
    <div className="relative flex h-screen flex-col overflow-hidden bg-[#606060] font-['Noto_Sans',sans-serif]">
      <TopBar />
      <div className="flex min-h-0 flex-1">
        <Toolbar />
        <DocumentArea />
        <PropertiesPanel />
      </div>
      <EditorWindow />
    </div>
  );
}
